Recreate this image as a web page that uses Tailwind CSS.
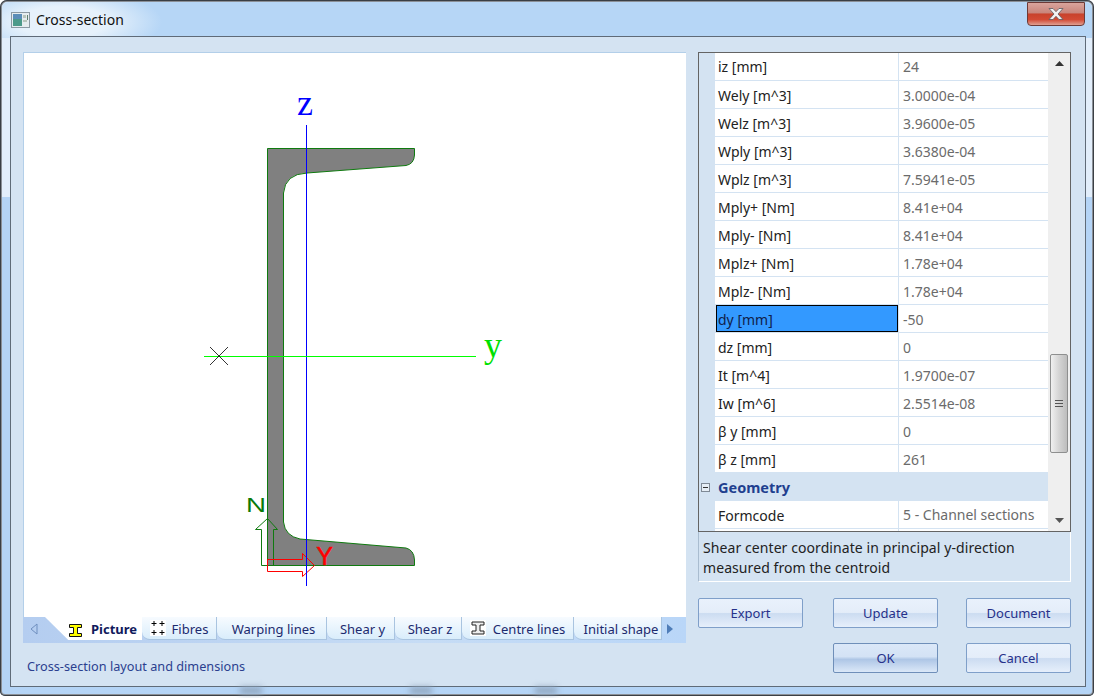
<!DOCTYPE html>
<html lang="en">
<head>
<meta charset="UTF-8">
<title>Cross-section</title>
<script src="https://cdn.jsdelivr.net/npm/@tailwindcss/browser@4"></script>
</head>
<body class="w-[1094px] h-[698px] overflow-hidden bg-white font-['Noto_Sans',sans-serif]">
<!-- Window frame -->
<div class="relative w-[1094px] h-[696px] flex flex-col rounded-t-[7px] rounded-b-[5px] shadow-[inset_0_0_0_1px_#3a3f45,inset_0_0_0_2px_#8b9097] bg-[linear-gradient(180deg,#e2eefb_197px,#b4d4f6_197px)]">
  <!-- Title bar -->
  <div class="h-[36px] shrink-0 mx-[2px] mt-[2px] -mb-[2px] rounded-t-[6px] flex items-center pl-[9px] bg-[radial-gradient(ellipse_100px_34px_at_60px_20px,#e6f1fb_45%,#b6d6f6_100%)]">
    <svg width="19" height="16" viewBox="0 0 19 16" class="shrink-0">
      <rect x="0.5" y="0.5" width="18" height="15" fill="#e6ecef" stroke="#8c99a3"/>
      <rect x="2" y="2" width="9" height="12" fill="#4d9a8a"/>
      <rect x="2" y="2" width="9" height="5" fill="#5b8db8"/>
      <rect x="12" y="3" width="3" height="3" fill="#b9c4bb"/>
      <rect x="16" y="3" width="1" height="5" fill="#5f7f6f"/>
      <rect x="12" y="8" width="4" height="2" fill="#b9c4bb"/>
    </svg>
    <span class="ml-[6px] text-[14px] leading-none text-[#111]">Cross-section</span>
  </div>
  <!-- Close button -->
  <div class="absolute left-[1027px] top-[2px] w-[58px] h-[24px] rounded-b-[4px] border border-[#6d3a36] flex items-center justify-center bg-[linear-gradient(180deg,#d9a49c_0%,#c9857b_45%,#c8422c_50%,#d24a34_75%,#e0a092_100%)]">
    <svg width="16" height="14" viewBox="0 0 16 13">
      <path d="M1 1h4l3 3.200L11 1h4l-5 5.500 5 5.500h-4L8 8.800 5 12H1l5-5.500z" fill="#f2f2f4" stroke="#5a5a60" stroke-width="0.8"/>
    </svg>
  </div>
  <!-- Client area -->
  <div class="ml-[10px] w-[1076px] h-[651px] shrink-0 border border-[#5f6b78] bg-[#d4e3f2] flex pt-[15px] pl-[12px] gap-[12px]">
    <!-- Left column -->
    <div class="w-[663px] flex flex-col">
      <div class="h-[565px] bg-white border-l border-t border-[#b3cfe9]">
        <svg width="662" height="564" viewBox="24 53 662 564" class="block">
          <path d="M267.500 148.500H414.500V155Q414 164 406 165.500L307 173Q285 174 283.500 193V522Q285 536 300 539L406 548Q414 550 414.500 560V565.500H267.500Z" fill="#808080" stroke="#0f7a0f" stroke-width="1"/>
          <path d="M261.500 565.500V529.500H255.500L267.500 518.500L277.500 529.500H273.500V565.500Z" fill="none" stroke="#0f7a0f" stroke-width="1"/>
          <path d="M267.500 559.500H302.500V553.500L314.500 565.500L302.500 576.500V571.500H267.500Z" fill="none" stroke="#ff0000" stroke-width="1"/>
          <line x1="306.500" y1="125" x2="306.500" y2="586" stroke="#0000ff" stroke-width="1"/>
          <line x1="204" y1="356.500" x2="476" y2="356.500" stroke="#00ff00" stroke-width="1"/>
          <line x1="210" y1="347" x2="228" y2="365" stroke="#000" stroke-width="0.8"/>
          <line x1="228" y1="347" x2="210" y2="365" stroke="#000" stroke-width="0.8"/>
          <text x="305" y="115" text-anchor="middle" font-family="Liberation Serif" font-size="36" fill="#0000ff">z</text>
          <text x="493" y="357" text-anchor="middle" font-family="Liberation Serif" font-size="36" fill="#00e000">y</text>
          <text x="246" y="512" font-family="Liberation Sans" font-size="21" textLength="20" lengthAdjust="spacingAndGlyphs" fill="#0a7a0a">N</text>
          <text x="324.500" y="565" text-anchor="middle" font-family="Liberation Sans" font-size="25" stroke="#ff0000" stroke-width="0.5" fill="#ff0000">Y</text>
        </svg>
      </div>
      <!-- Tabs -->
      <div class="h-[26px] flex items-start bg-[linear-gradient(90deg,#b4cdf0,#c6dcf5_60%,#b9d6f8)] text-[13px] text-[#1c2a6e]">
        <div class="w-[22px] h-[24px] shrink-0 flex items-center justify-center text-[#6f8fbf]">
          <svg width="8" height="12" viewBox="0 0 8 12"><path d="M7 1L1 6l6 5z" fill="none" stroke="currentColor"/></svg>
        </div>
        <div class="w-[97px] h-[23px] shrink-0 flex items-center pl-[24px] pt-[3px] bg-white [clip-path:polygon(0_0,100%_0,100%_100%,24%_100%)]">
          <svg width="13" height="13" viewBox="0 0 13 13" class="shrink-0">
            <path d="M.5 .500h12v3h-4v6h4v3H.5v-3h4v-6h-4z" fill="#ffff00" stroke="#111" stroke-width="1"/>
          </svg>
          <span class="ml-[9px] font-bold text-[#101a5c]">Picture</span>
        </div>
        <div class="w-[75px] h-[23px] shrink-0 flex items-center justify-center gap-[6px] pt-[3px] border-r border-b border-[#a9c4e0] rounded-bl-[8px] bg-[linear-gradient(180deg,#f7fbff,#d9edfb)]">
          <svg width="16" height="16" viewBox="0 0 16 16" class="shrink-0 bg-white -mt-[3px]">
            <path d="M4 1v5M1.500 3.500h5M12 1v5M9.500 3.500h5M4 10v5M1.500 12.500h5M12 10v5M9.500 12.500h5" stroke="#000" stroke-width="1"/>
          </svg>
          <span>Fibres</span>
        </div>
        <div class="w-[110px] h-[23px] shrink-0 flex items-center justify-center pl-[4px] pt-[3px] border-r border-b border-[#a9c4e0] rounded-bl-[8px] bg-[linear-gradient(180deg,#f7fbff,#d9edfb)]">Warping lines</div>
        <div class="w-[68px] h-[23px] shrink-0 flex items-center justify-center pl-[4px] pt-[3px] border-r border-b border-[#a9c4e0] rounded-bl-[8px] bg-[linear-gradient(180deg,#f7fbff,#d9edfb)]">Shear y</div>
        <div class="w-[67px] h-[23px] shrink-0 flex items-center justify-center pl-[4px] pt-[3px] border-r border-b border-[#a9c4e0] rounded-bl-[8px] bg-[linear-gradient(180deg,#f7fbff,#d9edfb)]">Shear z</div>
        <div class="w-[112px] h-[23px] shrink-0 flex items-center justify-center gap-[7px] pt-[3px] border-r border-b border-[#a9c4e0] rounded-bl-[8px] bg-[linear-gradient(180deg,#f7fbff,#d9edfb)]">
          <svg width="16" height="16" viewBox="0 0 16 16" class="shrink-0 bg-white -mt-[3px]">
            <path d="M2 2h12v3h-4v6h4v3H2v-3h4V5H2z" fill="#eee" stroke="#222" stroke-width="1"/>
          </svg>
          <span>Centre lines</span>
        </div>
        <div class="w-[88px] h-[23px] shrink-0 flex items-center justify-center pl-[7px] pt-[3px] border-r border-b border-[#a9c4e0] rounded-bl-[8px] bg-[linear-gradient(180deg,#f7fbff,#d9edfb)]">Initial shape</div>
        <div class="flex-1 h-[24px] flex items-center pl-[4px]">
          <svg width="8" height="12" viewBox="0 0 8 12"><path d="M1 1l6 5-6 5z" fill="#4f7db8"/></svg>
        </div>
      </div>
      <p class="mt-[15px] pl-[4px] text-[12.700px] leading-[16px] text-[#2b3f8f]">Cross-section layout and dimensions</p>
    </div>
    <!-- Right column -->
    <div class="w-[373px] flex flex-col">
      <div class="h-[480px] border border-[#646464] flex overflow-hidden text-[14px]">
        <div class="flex-1 bg-white flex flex-col overflow-hidden">
          <div class="h-[28px] shrink-0 flex bg-white border-b border-[#d4e3f2]"><div class="w-[16px] bg-[#d4e3f2]"></div><div class="w-[183px] pl-[3px] flex items-center text-[#222]">iz [mm]</div><div class="flex-1 pl-[4px] flex items-center border-l border-[#d4e3f2] text-[#6b6b6b]">24</div></div>
          <div class="h-[28px] shrink-0 flex bg-white border-b border-[#d4e3f2]"><div class="w-[16px] bg-[#d4e3f2]"></div><div class="w-[183px] pl-[3px] pt-px flex items-center text-[#222]">Wely [m^3]</div><div class="flex-1 pl-[4px] pt-px flex items-center border-l border-[#d4e3f2] text-[#6b6b6b]">3.0000e-04</div></div>
          <div class="h-[28px] shrink-0 flex bg-white border-b border-[#d4e3f2]"><div class="w-[16px] bg-[#d4e3f2]"></div><div class="w-[183px] pl-[3px] pt-px flex items-center text-[#222]">Welz [m^3]</div><div class="flex-1 pl-[4px] pt-px flex items-center border-l border-[#d4e3f2] text-[#6b6b6b]">3.9600e-05</div></div>
          <div class="h-[28px] shrink-0 flex bg-white border-b border-[#d4e3f2]"><div class="w-[16px] bg-[#d4e3f2]"></div><div class="w-[183px] pl-[3px] pt-px flex items-center text-[#222]">Wply [m^3]</div><div class="flex-1 pl-[4px] pt-px flex items-center border-l border-[#d4e3f2] text-[#6b6b6b]">3.6380e-04</div></div>
          <div class="h-[28px] shrink-0 flex bg-white border-b border-[#d4e3f2]"><div class="w-[16px] bg-[#d4e3f2]"></div><div class="w-[183px] pl-[3px] pt-px flex items-center text-[#222]">Wplz [m^3]</div><div class="flex-1 pl-[4px] pt-px flex items-center border-l border-[#d4e3f2] text-[#6b6b6b]">7.5941e-05</div></div>
          <div class="h-[28px] shrink-0 flex bg-white border-b border-[#d4e3f2]"><div class="w-[16px] bg-[#d4e3f2]"></div><div class="w-[183px] pl-[3px] pt-px flex items-center text-[#222]">Mply+ [Nm]</div><div class="flex-1 pl-[4px] pt-px flex items-center border-l border-[#d4e3f2] text-[#6b6b6b]">8.41e+04</div></div>
          <div class="h-[28px] shrink-0 flex bg-white border-b border-[#d4e3f2]"><div class="w-[16px] bg-[#d4e3f2]"></div><div class="w-[183px] pl-[3px] pt-px flex items-center text-[#222]">Mply- [Nm]</div><div class="flex-1 pl-[4px] pt-px flex items-center border-l border-[#d4e3f2] text-[#6b6b6b]">8.41e+04</div></div>
          <div class="h-[28px] shrink-0 flex bg-white border-b border-[#d4e3f2]"><div class="w-[16px] bg-[#d4e3f2]"></div><div class="w-[183px] pl-[3px] pt-px flex items-center text-[#222]">Mplz+ [Nm]</div><div class="flex-1 pl-[4px] pt-px flex items-center border-l border-[#d4e3f2] text-[#6b6b6b]">1.78e+04</div></div>
          <div class="h-[28px] shrink-0 flex bg-white border-b border-[#d4e3f2]"><div class="w-[16px] bg-[#d4e3f2]"></div><div class="w-[183px] pl-[3px] pt-px flex items-center text-[#222]">Mplz- [Nm]</div><div class="flex-1 pl-[4px] pt-px flex items-center border-l border-[#d4e3f2] text-[#6b6b6b]">1.78e+04</div></div>
          <div class="h-[28px] shrink-0 flex bg-white border-b border-[#d4e3f2]"><div class="w-[17px] bg-[#d4e3f2]"></div><div class="w-[182px] pl-[1px] pt-px flex items-center bg-[#3399ff] border border-black text-[#10204a]">dy [mm]</div><div class="flex-1 pl-[4px] pt-px flex items-center border-l border-[#d4e3f2] text-[#6b6b6b]">-50</div></div>
          <div class="h-[28px] shrink-0 flex bg-white border-b border-[#d4e3f2]"><div class="w-[16px] bg-[#d4e3f2]"></div><div class="w-[183px] pl-[3px] pt-px flex items-center text-[#222]">dz [mm]</div><div class="flex-1 pl-[4px] pt-px flex items-center border-l border-[#d4e3f2] text-[#6b6b6b]">0</div></div>
          <div class="h-[28px] shrink-0 flex bg-white border-b border-[#d4e3f2]"><div class="w-[16px] bg-[#d4e3f2]"></div><div class="w-[183px] pl-[3px] pt-px flex items-center text-[#222]">It [m^4]</div><div class="flex-1 pl-[4px] pt-px flex items-center border-l border-[#d4e3f2] text-[#6b6b6b]">1.9700e-07</div></div>
          <div class="h-[28px] shrink-0 flex bg-white border-b border-[#d4e3f2]"><div class="w-[16px] bg-[#d4e3f2]"></div><div class="w-[183px] pl-[3px] pt-px flex items-center text-[#222]">Iw [m^6]</div><div class="flex-1 pl-[4px] pt-px flex items-center border-l border-[#d4e3f2] text-[#6b6b6b]">2.5514e-08</div></div>
          <div class="h-[28px] shrink-0 flex bg-white border-b border-[#d4e3f2]"><div class="w-[16px] bg-[#d4e3f2]"></div><div class="w-[183px] pl-[3px] pt-px flex items-center text-[#222]">β y [mm]</div><div class="flex-1 pl-[4px] pt-px flex items-center border-l border-[#d4e3f2] text-[#6b6b6b]">0</div></div>
          <div class="h-[28px] shrink-0 flex bg-white border-b border-[#d4e3f2]"><div class="w-[16px] bg-[#d4e3f2]"></div><div class="w-[183px] pl-[3px] pt-px flex items-center text-[#222]">β z [mm]</div><div class="flex-1 pl-[4px] pt-px flex items-center border-l border-[#d4e3f2] text-[#6b6b6b]">261</div></div>
          <div class="h-[28px] shrink-0 flex items-center bg-[#d4e3f2]">
            <div class="w-[16px] pl-[2px]">
              <svg width="9" height="9" viewBox="0 0 9 9" class="block"><rect x="0.5" y="0.5" width="8" height="8" fill="#e6eef6" stroke="#7f8a96"/><path d="M2 4.500h5" stroke="#333"/></svg>
            </div>
            <span class="pl-[3px] pt-[2px] text-[14.500px] font-bold text-[#1f3f8f]">Geometry</span>
          </div>
          <div class="h-[28px] shrink-0 flex bg-white border-b border-[#d4e3f2]"><div class="w-[16px] bg-[#d4e3f2]"></div><div class="w-[183px] pl-[3px] pt-px flex items-center text-[#222]">Formcode</div><div class="flex-1 pl-[4px] flex items-center border-l border-[#d4e3f2] text-[#6b6b6b]">5 - Channel sections</div></div>
          <div class="h-[4px] shrink-0 flex bg-white"><div class="w-[16px] bg-[#d4e3f2]"></div><div class="w-[183px]"></div><div class="flex-1 border-l border-[#d4e3f2]"></div></div>
        </div>
        <!-- Scrollbar -->
        <div class="w-[22px] shrink-0 bg-[#efefef] flex flex-col items-center">
          <svg width="9" height="5" viewBox="0 0 9 5" class="mt-[8px]"><path d="M4.500 0L9 5H0z" fill="#333"/></svg>
          <div class="mt-[288px] w-[18px] h-[99px] rounded-[2px] border border-[#8e8f8f] bg-[linear-gradient(90deg,#f0f0f0,#d4d4d4_50%,#bdbdbd)] flex flex-col items-center justify-center gap-[2px]">
            <div class="w-[8px] h-px bg-[#555]"></div><div class="w-[8px] h-px bg-[#555]"></div><div class="w-[8px] h-px bg-[#555]"></div>
          </div>
          <svg width="9" height="5" viewBox="0 0 9 5" class="mt-[65px]"><path d="M0 0h9L4.500 5z" fill="#555"/></svg>
        </div>
      </div>
      <!-- Description -->
      <div class="h-[50px] border border-t-0 border-white border-l-[#a9bccf] pl-[4px] pt-[6px] text-[14px] tracking-[0.08px] leading-[20px] text-[#222]">Shear center coordinate in principal y-direction<br>measured from the centroid</div>
      <!-- Buttons -->
      <div class="mt-[16px] flex gap-[30px] text-[13px] text-[#26318a]">
        <button class="w-[105px] h-[30px] pt-[1px] rounded-[2px] border border-[#7f9fc9] bg-[linear-gradient(180deg,#e9f1fc_0%,#e4edf9_48%,#ccdcf1_52%,#e6effb_100%)]">Export</button>
        <button class="w-[105px] h-[30px] pt-[1px] rounded-[2px] border border-[#7f9fc9] bg-[linear-gradient(180deg,#e9f1fc_0%,#e4edf9_48%,#ccdcf1_52%,#e6effb_100%)]">Update</button>
        <button class="-ml-[2px] w-[105px] h-[30px] pt-[1px] rounded-[2px] border border-[#7f9fc9] bg-[linear-gradient(180deg,#e9f1fc_0%,#e4edf9_48%,#ccdcf1_52%,#e6effb_100%)]">Document</button>
      </div>
      <div class="mt-[15px] flex justify-end gap-[28px] text-[13px] text-[#26318a]">
        <button class="w-[105px] h-[30px] pt-[1px] rounded-[2px] border border-[#6f8fb9] bg-[linear-gradient(180deg,#dbe8f8_0%,#d3e2f5_45%,#aec6e6_55%,#dbe8f8_100%)]">OK</button>
        <button class="w-[105px] h-[30px] pt-[1px] rounded-[2px] border border-[#7f9fc9] bg-[linear-gradient(180deg,#e9f1fc_0%,#e4edf9_48%,#ccdcf1_52%,#e6effb_100%)]">Cancel</button>
      </div>
    </div>
  </div>
  <!-- Shadows of what lies behind the glass frame -->
  <div class="absolute left-[240px] top-[687px] w-[22px] h-[7px] blur-[3px] bg-[#8fa5bd]"></div>
  <div class="absolute left-[410px] top-[687px] w-[22px] h-[7px] blur-[3px] bg-[#8fa5bd]"></div>
  <div class="absolute left-[535px] top-[687px] w-[22px] h-[7px] blur-[3px] bg-[#8fa5bd]"></div>
</div>
</body>
</html>
